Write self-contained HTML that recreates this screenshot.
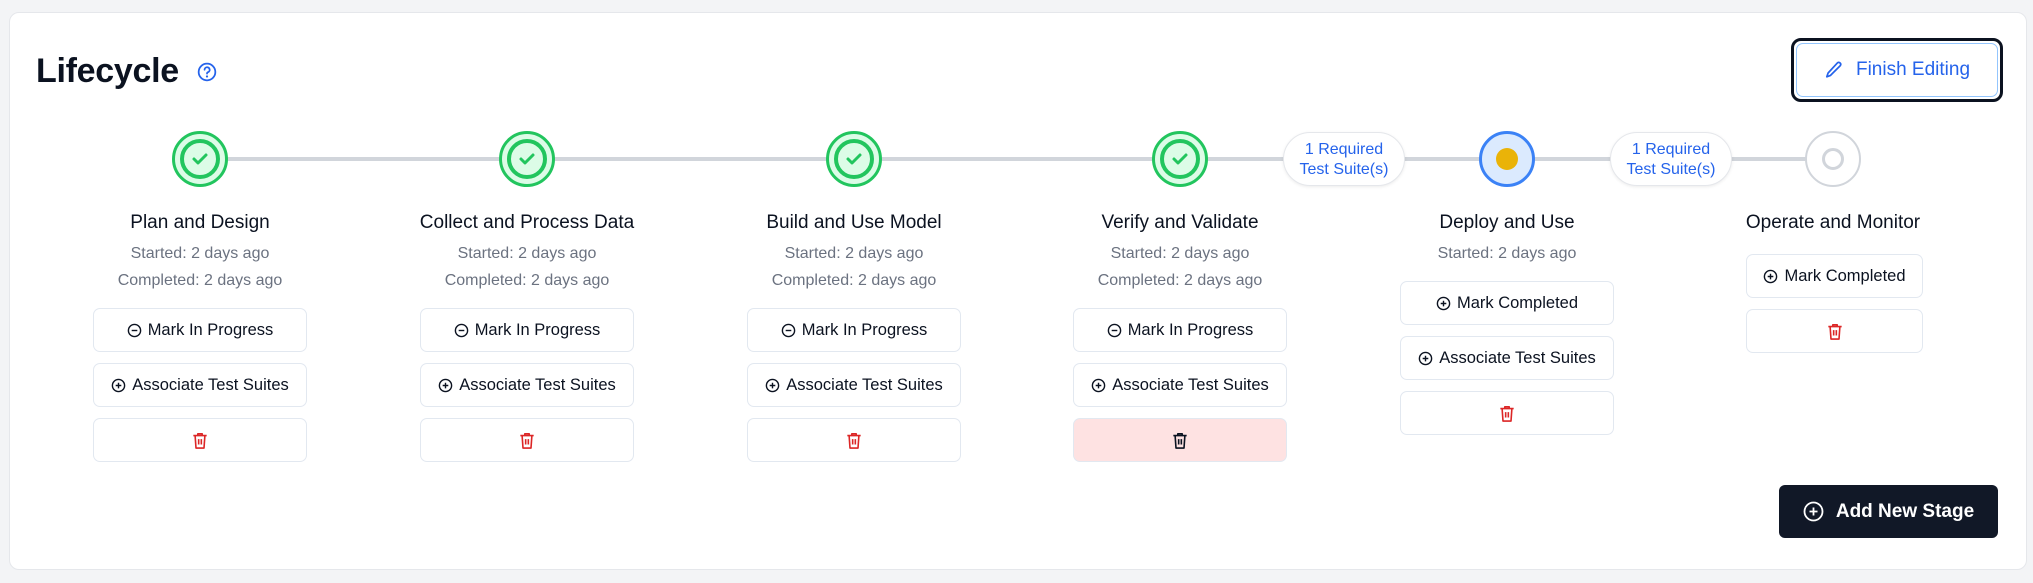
<!DOCTYPE html>
<html><head><meta charset="utf-8"><style>
*{box-sizing:border-box;margin:0;padding:0}
body{width:2033px;height:583px;background:#f3f4f6;font-family:"Liberation Sans",sans-serif;position:relative;overflow:hidden;color:#0b1220}
.card{position:absolute;left:9px;top:12px;width:2018px;height:558px;background:#fff;border:1px solid #e5e7eb;border-radius:10px}
.abs{position:absolute}
.title{left:36px;top:52px;font-size:34px;font-weight:bold;letter-spacing:-0.3px}
.line{left:200px;top:157px;width:1633px;height:4px;background:#d1d5db}
.circ{position:absolute;width:56px;height:56px;border-radius:50%;top:131px}
.done{background:#dcfce7;border:3px solid #22c55e}
.done .in{position:absolute;left:5px;top:5px;width:40px;height:40px;border-radius:50%;border:4px solid #22c55e}
.badge{position:absolute;top:132px;width:122px;height:54px;border-radius:27px;background:#fff;border:1px solid #e5e7eb;box-shadow:0 1px 3px rgba(0,0,0,.08);color:#2563eb;font-size:16px;line-height:20px;text-align:center;padding-top:7px}
.st{position:absolute;width:300px;text-align:center}
.name{font-size:19px;top:212px}
.sub{font-size:16px;color:#6b7280}
.btn{position:absolute;height:44px;border:1px solid #e2e8f0;border-radius:7px;background:#fff;display:flex;align-items:center;justify-content:center;font-size:16.5px;gap:6px}
</style></head><body>
<div class="card"></div>
<div class="abs title">Lifecycle</div>
<svg class="abs" style="left:197px;top:62px" width="20" height="20" viewBox="0 0 18 18"><circle cx="9" cy="9" r="7.5" fill="none" stroke="#2563eb" stroke-width="1.6"/><path d="M6.8 7a2.3 2.3 0 1 1 3 2.2c-.6.3-.8.7-.8 1.3" fill="none" stroke="#2563eb" stroke-width="1.6" stroke-linecap="round"/><circle cx="9" cy="13" r="1" fill="#2563eb"/></svg>

<div class="abs" style="left:1791px;top:38px;width:212px;height:64px;border:3px solid #0b1220;border-radius:10px"></div>
<div class="abs" style="left:1796px;top:43px;width:202px;height:54px;border:1.5px solid #93c5fd;border-radius:7px;display:flex;align-items:center;justify-content:center;gap:12px;color:#2563eb;font-size:19px">
<svg width="20" height="20" viewBox="0 0 20 20"><path d="M13.5 2.8a2 2 0 0 1 2.8 2.8L6.5 15.4 2.8 16.8l1.3-3.8z" fill="none" stroke="#2563eb" stroke-width="1.7" stroke-linejoin="round"/></svg>Finish Editing</div>

<div class="abs line"></div>
<div class="circ done" style="left:172px"><div class="in"></div><svg class="abs" style="left:16px;top:18px" width="18" height="14" viewBox="0 0 18 14"><path d="M3 7l4 4 8-8" fill="none" stroke="#22c55e" stroke-width="3" stroke-linecap="round" stroke-linejoin="round"/></svg></div>
<div class="circ done" style="left:499px"><div class="in"></div><svg class="abs" style="left:16px;top:18px" width="18" height="14" viewBox="0 0 18 14"><path d="M3 7l4 4 8-8" fill="none" stroke="#22c55e" stroke-width="3" stroke-linecap="round" stroke-linejoin="round"/></svg></div>
<div class="circ done" style="left:826px"><div class="in"></div><svg class="abs" style="left:16px;top:18px" width="18" height="14" viewBox="0 0 18 14"><path d="M3 7l4 4 8-8" fill="none" stroke="#22c55e" stroke-width="3" stroke-linecap="round" stroke-linejoin="round"/></svg></div>
<div class="circ done" style="left:1152px"><div class="in"></div><svg class="abs" style="left:16px;top:18px" width="18" height="14" viewBox="0 0 18 14"><path d="M3 7l4 4 8-8" fill="none" stroke="#22c55e" stroke-width="3" stroke-linecap="round" stroke-linejoin="round"/></svg></div>
<div class="circ" style="left:1479px;background:#dbeafe;border:3px solid #3b82f6"><div class="abs" style="left:14px;top:14px;width:22px;height:22px;border-radius:50%;background:#eab308"></div></div>
<div class="circ" style="left:1805px;background:#fff;border:2px solid #d1d5db"><div class="abs" style="left:15px;top:15px;width:22px;height:22px;border-radius:50%;border:3px solid #d1d5db"></div></div>
<div class="badge" style="left:1283px">1 Required<br>Test Suite(s)</div>
<div class="badge" style="left:1610px">1 Required<br>Test Suite(s)</div>

<div class="st name" style="left:50px">Plan and Design</div>
<div class="st name" style="left:377px">Collect and Process Data</div>
<div class="st name" style="left:704px">Build and Use Model</div>
<div class="st name" style="left:1030px">Verify and Validate</div>
<div class="st name" style="left:1357px">Deploy and Use</div>
<div class="st name" style="left:1683px">Operate and Monitor</div>

<div class="st sub" style="left:50px;top:245px">Started: 2 days ago</div>
<div class="st sub" style="left:50px;top:272px">Completed: 2 days ago</div>
<div class="st sub" style="left:377px;top:245px">Started: 2 days ago</div>
<div class="st sub" style="left:377px;top:272px">Completed: 2 days ago</div>
<div class="st sub" style="left:704px;top:245px">Started: 2 days ago</div>
<div class="st sub" style="left:704px;top:272px">Completed: 2 days ago</div>
<div class="st sub" style="left:1030px;top:245px">Started: 2 days ago</div>
<div class="st sub" style="left:1030px;top:272px">Completed: 2 days ago</div>
<div class="st sub" style="left:1357px;top:245px">Started: 2 days ago</div>

<svg width="0" height="0" style="position:absolute"><defs>
<symbol id="minus" viewBox="0 0 16 16"><circle cx="8" cy="8" r="6.5" fill="none" stroke="currentColor" stroke-width="1.5"/><path d="M5 8h6" stroke="currentColor" stroke-width="1.5"/></symbol>
<symbol id="plus" viewBox="0 0 16 16"><circle cx="8" cy="8" r="6.5" fill="none" stroke="currentColor" stroke-width="1.5"/><path d="M5 8h6M8 5v6" stroke="currentColor" stroke-width="1.5"/></symbol>
<symbol id="trash" viewBox="0 0 18 20"><path d="M1.5 4.5h15M6.5 4.5V2.5h5v2M3.5 4.5l1 14h9l1-14M7.5 8.5v6M10.5 8.5v6" fill="none" stroke="currentColor" stroke-width="1.8" stroke-linejoin="round"/></symbol>
</defs></svg>

<div class="btn" style="left:93px;top:308px;width:214px"><svg width="15" height="15"><use href="#minus"/></svg>Mark In Progress</div>
<div class="btn" style="left:93px;top:363px;width:214px"><svg width="15" height="15"><use href="#plus"/></svg>Associate Test Suites</div>
<div class="btn" style="left:93px;top:418px;width:214px;color:#dc2626"><svg width="16" height="19"><use href="#trash"/></svg></div>

<div class="btn" style="left:420px;top:308px;width:214px"><svg width="15" height="15"><use href="#minus"/></svg>Mark In Progress</div>
<div class="btn" style="left:420px;top:363px;width:214px"><svg width="15" height="15"><use href="#plus"/></svg>Associate Test Suites</div>
<div class="btn" style="left:420px;top:418px;width:214px;color:#dc2626"><svg width="16" height="19"><use href="#trash"/></svg></div>

<div class="btn" style="left:747px;top:308px;width:214px"><svg width="15" height="15"><use href="#minus"/></svg>Mark In Progress</div>
<div class="btn" style="left:747px;top:363px;width:214px"><svg width="15" height="15"><use href="#plus"/></svg>Associate Test Suites</div>
<div class="btn" style="left:747px;top:418px;width:214px;color:#dc2626"><svg width="16" height="19"><use href="#trash"/></svg></div>

<div class="btn" style="left:1073px;top:308px;width:214px"><svg width="15" height="15"><use href="#minus"/></svg>Mark In Progress</div>
<div class="btn" style="left:1073px;top:363px;width:214px"><svg width="15" height="15"><use href="#plus"/></svg>Associate Test Suites</div>
<div class="btn" style="left:1073px;top:418px;width:214px;background:#fee2e2;color:#0b1220"><svg width="16" height="19"><use href="#trash"/></svg></div>

<div class="btn" style="left:1400px;top:281px;width:214px"><svg width="15" height="15"><use href="#plus"/></svg>Mark Completed</div>
<div class="btn" style="left:1400px;top:336px;width:214px"><svg width="15" height="15"><use href="#plus"/></svg>Associate Test Suites</div>
<div class="btn" style="left:1400px;top:391px;width:214px;color:#dc2626"><svg width="16" height="19"><use href="#trash"/></svg></div>

<div class="btn" style="left:1746px;top:254px;width:177px"><svg width="15" height="15"><use href="#plus"/></svg>Mark Completed</div>
<div class="btn" style="left:1746px;top:309px;width:177px;color:#dc2626"><svg width="16" height="19"><use href="#trash"/></svg></div>

<div class="abs" style="left:1779px;top:485px;width:219px;height:53px;background:#111827;border-radius:6px;color:#fff;font-size:19px;font-weight:bold;display:flex;align-items:center;justify-content:center;gap:12px">
<svg width="21" height="21" viewBox="0 0 21 21"><circle cx="10.5" cy="10.5" r="9" fill="none" stroke="#fff" stroke-width="1.8"/><path d="M6.5 10.5h8M10.5 6.5v8" stroke="#fff" stroke-width="1.8"/></svg>Add New Stage</div>
</body></html>
